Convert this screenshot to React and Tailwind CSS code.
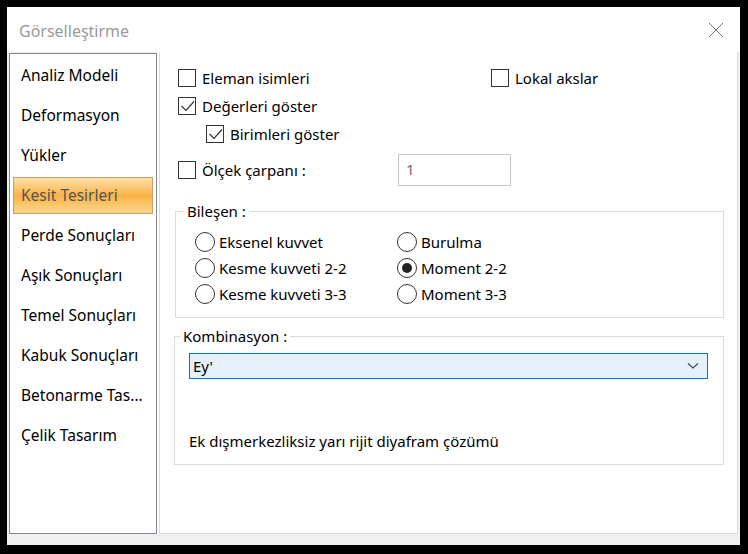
import React, { useState } from "react";

const font = { fontFamily: '"Noto Sans", "Open Sans", sans-serif' };

const menuItems = [
  "Analiz Modeli",
  "Deformasyon",
  "Yükler",
  "Kesit Tesirleri",
  "Perde Sonuçları",
  "Aşık Sonuçları",
  "Temel Sonuçları",
  "Kabuk Sonuçları",
  "Betonarme Tas...",
  "Çelik Tasarım",
];

// Checkbox with thin check mark
const CheckBox = ({ checked, label, onClick }) => (
  <div className="flex items-center cursor-default" onClick={onClick}>
    <div className="w-[18px] h-[18px] border border-[#333333] bg-white flex items-center justify-center">
      {checked && (
        <svg width="16" height="16" viewBox="0 0 16 16">
          <path
            d="M2.5 8 L7 12.5 L15 3.5"
            fill="none"
            stroke="#333333"
            strokeWidth="1.2"
          />
        </svg>
      )}
    </div>
    <span className="ml-[6px] text-[15px] text-black leading-[22px]">{label}</span>
  </div>
);

const Radio = ({ checked, label, onClick }) => (
  <div className="flex items-center h-[26px] cursor-default" onClick={onClick}>
    <div className="w-[20px] h-[20px] rounded-full border border-[#333333] bg-white flex items-center justify-center">
      {checked && <div className="w-[10px] h-[10px] rounded-full bg-[#222222]" />}
    </div>
    <span className="ml-[4px] text-[15px] text-black leading-[22px]">{label}</span>
  </div>
);

export default function App() {
  const [selected, setSelected] = useState(3);
  const [checks, setChecks] = useState({
    eleman: false,
    degerler: true,
    birimler: true,
    olcek: false,
    lokal: false,
  });
  const [radio, setRadio] = useState("m22");

  const toggle = (key) => setChecks({ ...checks, [key]: !checks[key] });

  return (
    <div
      className="w-[748px] h-[554px] bg-black pt-[7px] pl-[7px] pr-[8px] pb-[9px]"
      style={font}
    >
      <div className="w-full h-full bg-white flex flex-col">
        {/* Title bar */}
        <div className="h-[45px] flex items-center justify-between pl-[12px] pr-[16px] shrink-0">
          <span className="text-[16px] text-[#9a9a9a] mt-[3px]">Görselleştirme</span>
          <svg width="16" height="16" viewBox="0 0 16 16" className="mt-[1px]">
            <path d="M1 1 L15 15 M15 1 L1 15" stroke="#777777" strokeWidth="1" />
          </svg>
        </div>

        {/* Body */}
        <div className="flex-1 flex bg-[#f0f0f0] pl-[2px] pr-[2px] pb-[11px]">
          {/* Left list */}
          <div className="w-[148px] mt-[1px] border border-[#828790] bg-white pt-[1px]">
            {menuItems.map((item, index) => (
              <div
                key={index}
                className="h-[40px] flex items-center px-[3px]"
                onClick={() => setSelected(index)}
              >
                <div
                  className={`w-full h-[37px] flex items-center pl-[7px] border text-[15.5px] ${
                    selected === index
                      ? "border-[#c5a268] bg-gradient-to-b from-[#fde0a8] via-[#f9b347] to-[#fcd68a] text-[#555555]"
                      : "border-transparent text-black"
                  }`}
                >
                  <span className="whitespace-nowrap pt-[2px]">{item}</span>
                </div>
              </div>
            ))}
          </div>

          <div className="w-[2px] bg-white" />

          {/* Right panel */}
          <div className="flex-1 bg-white border-l border-r border-b border-[#dcdcdc] pt-[12px] pl-[18px] pr-[13px]">
            <div className="h-[28px] flex items-center">
              <div className="w-[313px]">
                <CheckBox
                  checked={checks.eleman}
                  label="Eleman isimleri"
                  onClick={() => toggle("eleman")}
                />
              </div>
              <CheckBox
                checked={checks.lokal}
                label="Lokal akslar"
                onClick={() => toggle("lokal")}
              />
            </div>
            <div className="h-[28px] flex items-center">
              <CheckBox
                checked={checks.degerler}
                label="Değerleri göster"
                onClick={() => toggle("degerler")}
              />
            </div>
            <div className="h-[28px] flex items-center pl-[28px]">
              <CheckBox
                checked={checks.birimler}
                label="Birimleri göster"
                onClick={() => toggle("birimler")}
              />
            </div>
            <div className="h-[32px] mt-[6px] flex items-center">
              <div className="w-[220px]">
                <CheckBox
                  checked={checks.olcek}
                  label="Ölçek çarpanı :"
                  onClick={() => toggle("olcek")}
                />
              </div>
              <div className="w-[113px] h-[32px] border border-[#c8c8c8] pl-[7px] pt-[3px] text-[15px] text-[#6d6d6d]">
                1
              </div>
            </div>

            {/* Bileşen */}
            <fieldset className="mt-[14px] -ml-[3px] w-[549px] border border-[#dcdcdc] pt-[7px] pb-[10px]">
              <legend className="ml-[7px] px-[4px] text-[15px] leading-[22px] text-black">
                Bileşen :
              </legend>
              <div className="grid grid-cols-[202px_1fr] pl-[19px]">
                <Radio
                  checked={radio === "eksenel"}
                  label="Eksenel kuvvet"
                  onClick={() => setRadio("eksenel")}
                />
                <Radio
                  checked={radio === "burulma"}
                  label="Burulma"
                  onClick={() => setRadio("burulma")}
                />
                <Radio
                  checked={radio === "k22"}
                  label="Kesme kuvveti 2-2"
                  onClick={() => setRadio("k22")}
                />
                <Radio
                  checked={radio === "m22"}
                  label="Moment 2-2"
                  onClick={() => setRadio("m22")}
                />
                <Radio
                  checked={radio === "k33"}
                  label="Kesme kuvveti 3-3"
                  onClick={() => setRadio("k33")}
                />
                <Radio
                  checked={radio === "m33"}
                  label="Moment 3-3"
                  onClick={() => setRadio("m33")}
                />
              </div>
            </fieldset>

            {/* Kombinasyon */}
            <fieldset className="mt-[7px] -ml-[4px] w-[550px] border border-[#dcdcdc] pt-[6px] pb-[12px]">
              <legend className="ml-[5px] px-[3px] text-[15px] leading-[22px] text-black">
                Kombinasyon :
              </legend>
              <div className="pl-[14px] pr-[15px]">
                <div className="h-[26px] border border-[#0078d7] bg-[#e5f1fb] flex items-center justify-between pl-[3px] pr-[8px]">
                  <span className="text-[15px] text-black">Ey'</span>
                  <svg width="12" height="8" viewBox="0 0 12 8">
                    <path d="M1 1.5 L6 6 L11 1.5" fill="none" stroke="#444444" strokeWidth="1.2" />
                  </svg>
                </div>
                <div className="mt-[51px] text-[15px] leading-[22px] text-black">
                  Ek dışmerkezliksiz yarı rijit diyafram çözümü
                </div>
              </div>
            </fieldset>
          </div>
        </div>
      </div>
    </div>
  );
}
